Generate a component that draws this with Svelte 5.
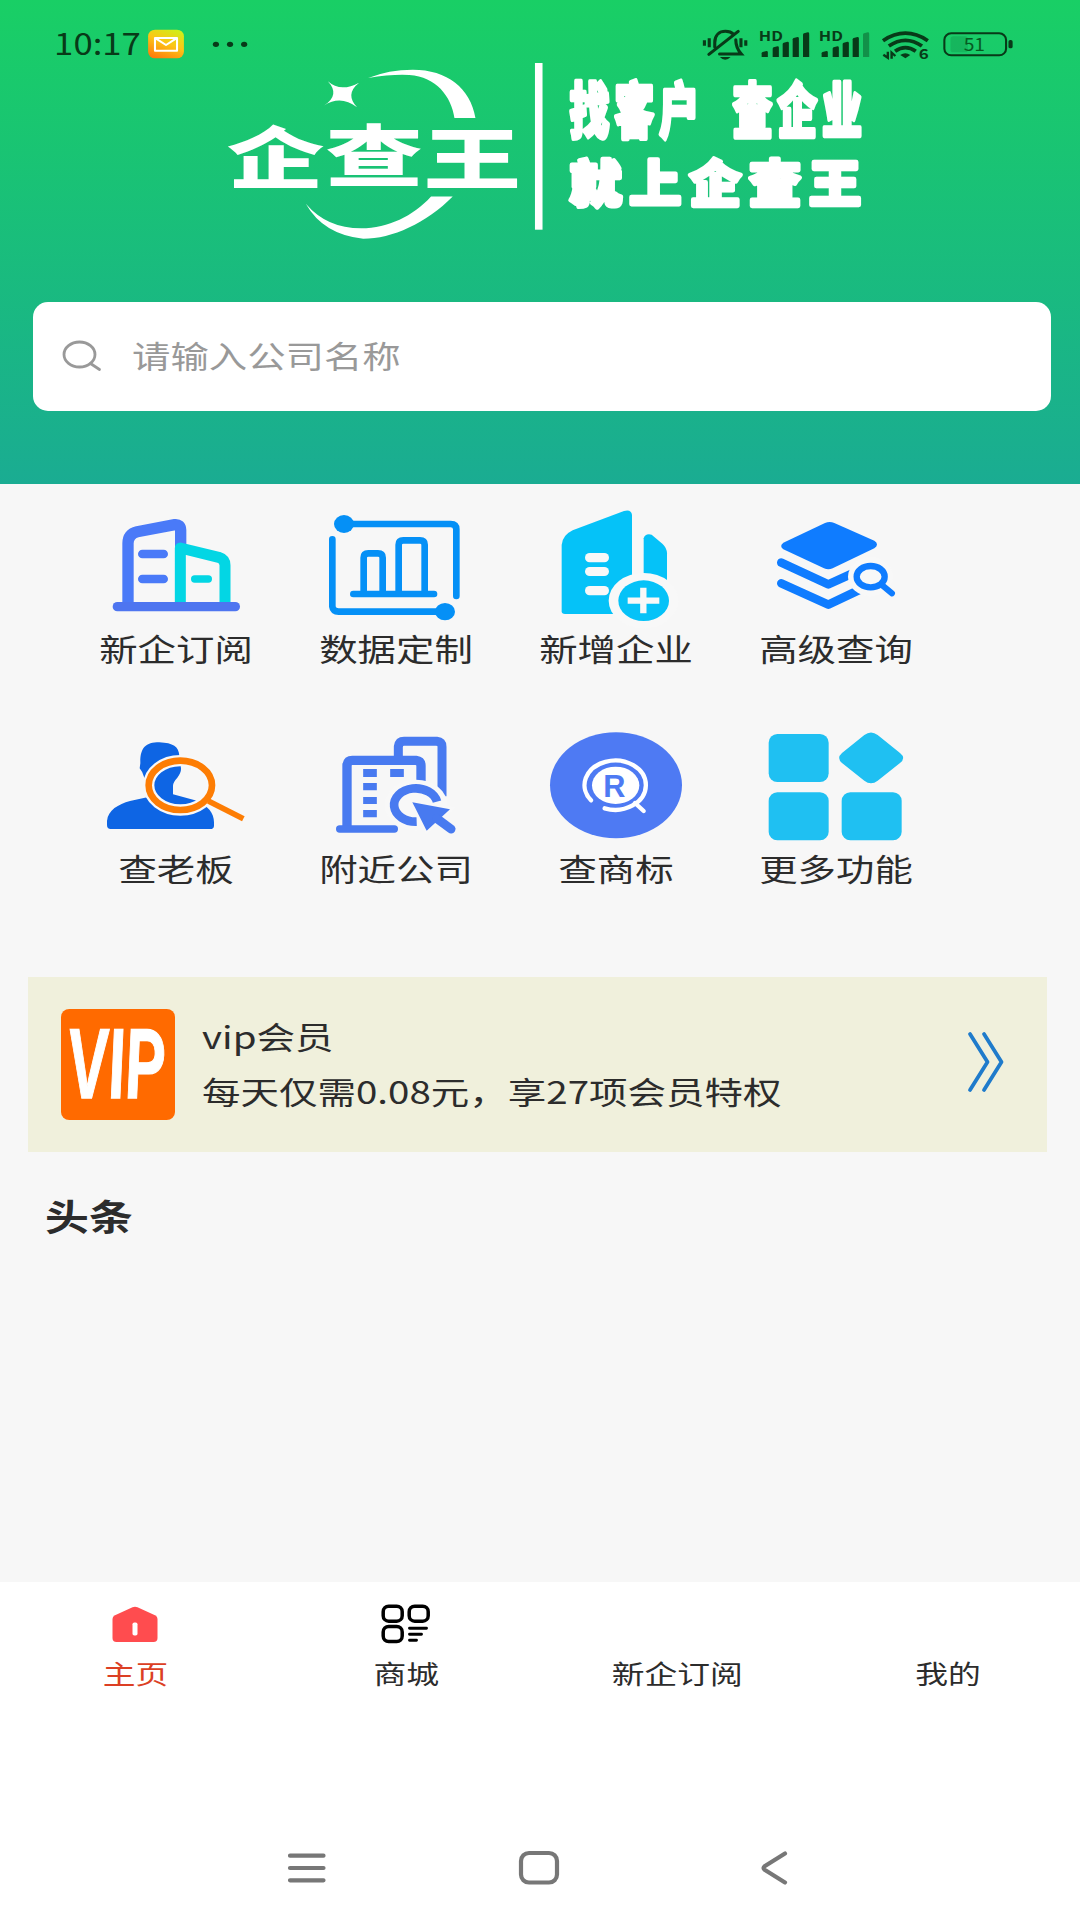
<script lang="ts">
interface Feature {
  id: string;
  label: string;
  viewBox: string;
}

interface Tab {
  id: string;
  label: string;
}

const features: Feature[] = [
  { id: 'subscribe', label: '新企订阅', viewBox: '75 45 420 360' },
  { id: 'data', label: '数据定制', viewBox: '735 45 420 360' },
  { id: 'added', label: '新增企业', viewBox: '75 45 420 360' },
  { id: 'advanced', label: '高级查询', viewBox: '735 45 420 360' },
  { id: 'boss', label: '查老板', viewBox: '75 30 420 360' },
  { id: 'nearby', label: '附近公司', viewBox: '735 30 420 360' },
  { id: 'trademark', label: '查商标', viewBox: '75 30 420 360' },
  { id: 'more', label: '更多功能', viewBox: '735 30 420 360' },
];

const tabs: Tab[] = [
  { id: 'home', label: '主页' },
  { id: 'mall', label: '商城' },
  { id: 'subscribe', label: '新企订阅' },
  { id: 'mine', label: '我的' },
];

const bars = [
  { x: 643, y: 152 },
  { x: 675, y: 138 },
  { x: 704, y: 124 },
  { x: 733, y: 110 },
  { x: 763, y: 96 },
];

let keyword = $state('');
let activeTab = $state('home');
</script>

{#snippet signal(offset: number, weak: boolean)}
  <g transform="translate({offset} 0)">
    <text x="635" y="123" font-size="38" font-weight="700" textLength="70" lengthAdjust="spacingAndGlyphs">HD</text>
    {#each bars as bar, i}
      <path
        d="M{bar.x} {bar.y + 7}q0-3 3-4l11-3q4 0 4 4V170h-18z"
        opacity={weak && i === bars.length - 1 ? 0.4 : 1}
      />
    {/each}
  </g>
{/snippet}

<div class="app">
  <header class="hero">
    <div class="status">
      <svg class="status-left" viewBox="145 80 581 105" preserveAspectRatio="none">
        <defs>
          <linearGradient id="mail" x1="0.2" y1="1" x2="0.7" y2="0">
            <stop offset="0" stop-color="#ff7a0c" />
            <stop offset="0.55" stop-color="#fcc516" />
            <stop offset="1" stop-color="#d3ec18" />
          </linearGradient>
        </defs>
        <text x="157" y="165" font-size="90" textLength="252" lengthAdjust="spacingAndGlyphs">10:17</text>
        <rect x="430" y="88" width="104" height="86" rx="20" fill="url(#mail)" />
        <path d="M450 113H514V151H450ZM452 114L482 134 512 114" fill="none" stroke="#fff" stroke-width="6" stroke-linejoin="round" />
        <ellipse cx="627" cy="132" rx="9" ry="8" />
        <ellipse cx="668" cy="132" rx="9" ry="8" />
        <ellipse cx="709" cy="132" rx="9" ry="8" />
      </svg>
      <svg class="status-right" viewBox="470 80 905 105" preserveAspectRatio="none">
        <g fill="none" stroke="currentColor" stroke-width="9" stroke-linecap="round">
          <path d="M507 140V127C507 104 521 93 538 93C548 93 557 97 562 102" />
          <path d="M568 118C568 138 573 148 584 161H521" />
          <path d="M490 162L575 93" />
          <path d="M477 120V136M491 114V141M583 114V141M597 120V136" stroke-linecap="butt" />
        </g>
        <path d="M522 170H553Q537 187 522 170Z" />
        {@render signal(0, false)}
        {@render signal(174, true)}
        <g fill="none" stroke="currentColor" stroke-width="11">
          <path d="M995 121Q1060 76 1125 121" />
          <path d="M1012 137Q1060 103 1108 137" />
          <path d="M1030 153Q1060 131 1090 153" />
        </g>
        <path d="M1045 164Q1060 153 1074 164L1060 174Z" />
        <path d="M1009 154V172L996 163M1020 175V157L1031 167" fill="none" stroke="currentColor" stroke-width="7" />
        <text x="1099" y="177" font-size="41" font-weight="700" textLength="29" lengthAdjust="spacingAndGlyphs">6</text>
        <rect x="1191" y="108" width="50" height="48" rx="8" opacity="0.15" />
        <rect x="1173" y="99" width="179" height="66" rx="20" fill="none" stroke="currentColor" stroke-width="6" />
        <rect x="1359" y="119" width="12" height="25" rx="5" />
        <text x="1229" y="153" font-size="54" fill="#075a22" textLength="62" lengthAdjust="spacingAndGlyphs">51</text>
      </svg>
    </div>

    <svg class="logo" viewBox="660 180 1860 550" preserveAspectRatio="none">
      <g fill="#fff">
        <path d="M1070 234Q1130 209 1200 209C1300 209 1368 265 1382 354H1321C1312 290 1268 230 1190 225Q1140 222 1070 234Z" />
        <path d="M889 612Q950 686 1050 686C1130 684 1200 650 1253 590H1316C1240 670 1140 717 1056 717Q940 705 889 612Z" />
        <path d="M953 244Q990 278 1044 248Q1002 282 1038 322Q990 284 942 317Q990 285 953 244Z" />
        <rect x="1555" y="189" width="22" height="501" />
      </g>
      <g class="logo-name">
        <text transform="translate(660 549) scale(1.4 1)">企</text>
        <text transform="translate(946 544) scale(1.4 1)">查</text>
        <text transform="translate(1231 552) scale(1.4 1)">王</text>
      </g>
      <g class="slogan">
        {#each ['找', '客', '户'] as char, i}
          <text transform="translate({1656 + i * 130} 399) scale(0.64 1)" font-size="180">{char}</text>
        {/each}
        {#each ['查', '企', '业'] as char, i}
          <text transform="translate({2130 + i * 130} 399) scale(0.64 1)" font-size="180">{char}</text>
        {/each}
        {#each ['就', '上', '企', '查', '王'] as char, i}
          <text transform="translate({1656 + i * 174} 607)" font-size="150">{char}</text>
        {/each}
      </g>
    </svg>

    <label class="search">
      <svg width="40" height="32" viewBox="0 0 40 32" fill="none" stroke="#999" stroke-width="2.8" stroke-linecap="round">
        <ellipse cx="16.500" cy="13.500" rx="15.500" ry="12.500" />
        <path d="M27.500 22.500L36.500 28.500" />
      </svg>
      <input bind:value={keyword} placeholder="请输入公司名称" />
    </label>
  </header>

  <main>
    <section class="features">
      {#each features as feature (feature.label)}
        <div class="feature">
          <svg width="140" height="120" viewBox={feature.viewBox} fill="none">
            {#if feature.id === 'subscribe'}
              <path d="M144 350V160Q144 132 172 125L284 104Q302 102 302 120V170" stroke="#4a7af8" stroke-width="34" />
              <path d="M301 340V174L416 202Q435 208 435 226V340" stroke="#03d6e4" stroke-width="33" stroke-linejoin="round" />
              <path d="M187 192H251M187 267H251" stroke="#4a7af8" stroke-width="26" stroke-linecap="round" />
              <path d="M344 267H385" stroke="#03d6e4" stroke-width="22" stroke-linecap="round" />
              <path d="M112 350H466" stroke="#4e75f0" stroke-width="28" stroke-linecap="round" />
            {:else if feature.id === 'data'}
              <g stroke="#0590f6" stroke-width="20" stroke-linecap="round">
                <path d="M815 102H1112Q1129 102 1129 118V318M757 148V350Q759 365 776 365H1070" />
                <path d="M820 312H1062" />
                <path d="M851 305V203Q851 190 865 190H894Q908 190 908 203V305M956 305V164Q956 151 970 151H1020Q1034 151 1034 164V305" />
              </g>
              <ellipse cx="792" cy="102" rx="30" ry="27" fill="#0590f6" />
              <ellipse cx="1095" cy="365" rx="30" ry="26" fill="#0590f6" />
            {:else if feature.id === 'added'}
              <path d="M125 165Q127 136 158 121L312 63Q334 57 336 75V372H135Q125 372 125 364Z" fill="#05c2f8" />
              <path d="M371 145Q376 129 395 134L427 161Q441 174 441 190V300H371Z" fill="#05c2f8" />
              <rect x="195" y="189" width="72" height="28" rx="14" fill="#f8f8f8" />
              <rect x="195" y="231" width="72" height="27" rx="14" fill="#f8f8f8" />
              <rect x="195" y="288" width="72" height="28" rx="14" fill="#f8f8f8" />
              <ellipse cx="371" cy="332" rx="105" ry="83" fill="#f8f8f8" />
              <ellipse cx="371" cy="332" rx="76" ry="61" fill="#05c2f8" />
              <path d="M370 293V370M323 332H418" stroke="#f8f8f8" stroke-width="19" />
            {:else if feature.id === 'advanced'}
              <path d="M790 158L915 99Q929 93 943 99L1063 152Q1079 163 1063 175L938 235Q925 241 912 235L790 178Q777 168 790 158Z" fill="#0f7cff" />
              <path d="M784 218L925 283L1020 240M784 280L925 344L1030 294" stroke="#0f7cff" stroke-width="26" stroke-linecap="round" stroke-linejoin="round" />
              <ellipse cx="1052" cy="260" rx="68" ry="59" fill="#f8f8f8" />
              <ellipse cx="1052" cy="260" rx="42" ry="32" stroke="#0f7cff" stroke-width="19" />
              <path d="M1088 287L1116 310" stroke="#0f7cff" stroke-width="18" stroke-linecap="round" />
            {:else if feature.id === 'boss'}
              <path
                d="M181 145C180 100 195 82 238 82C280 84 296 95 298 122L303 160Q304 172 292 188Q279 202 279 212V238L345 256C385 272 402 295 402 322V332Q402 342 390 342H92Q81 342 81 330V318C84 285 115 268 150 258L205 246Q215 200 193 188Q188 170 179 160Z"
                fill="#0e65e4"
              />
              <ellipse cx="301" cy="211" rx="95" ry="74" stroke="#f8f8f8" stroke-width="34" />
              <path d="M385 258L490 311" stroke="#fd7d04" stroke-width="17" />
              <ellipse cx="301" cy="211" rx="95" ry="74" stroke="#fd7d04" stroke-width="20" />
            {:else if feature.id === 'nearby'}
              <g stroke="#487af0" stroke-width="28">
                <path d="M955 130V95Q957 79 972 79H1070Q1086 81 1086 95V244" stroke-width="27" />
                <path d="M801 345V150Q803 136 817 136H1008Q1023 138 1023 152V205" />
                <path d="M779 342H943" stroke-width="22" stroke-linecap="round" />
              </g>
              <path d="M870 162V186M870 204V226M870 246V267M870 285V307M951 162V186" stroke="#487af0" stroke-width="41" />
              <ellipse cx="1008" cy="270" rx="94" ry="76" fill="#f8f8f8" />
              <path d="M1071 260A65 50 0 1 0 1010 320" stroke="#487af0" stroke-width="26" />
              <path d="M997 262L1110 283L1040 347Z" fill="#487af0" stroke="#f8f8f8" stroke-width="16" />
              <path d="M997 262L1110 283L1040 347Z" fill="#487af0" />
              <path d="M1070 310L1113 342" stroke="#487af0" stroke-width="27" stroke-linecap="round" />
            {:else if feature.id === 'trademark'}
              <ellipse cx="288" cy="211" rx="198" ry="159" fill="#4e7af3" />
              <path d="M213 256A92 74 0 1 1 254 280" stroke="#fff" stroke-width="13" stroke-linecap="round" />
              <path d="M345 264L371 288" stroke="#fff" stroke-width="13" stroke-linecap="round" />
              <ellipse cx="287" cy="211" rx="71" ry="56" fill="#fff" />
              <text x="250" y="246" class="mark">R</text>
            {:else}
              <g fill="#1fc0f2">
                <rect x="746" y="57" width="180" height="144" rx="26" />
                <rect x="746" y="232" width="180" height="144" rx="26" />
                <rect x="965" y="232" width="180" height="144" rx="26" />
                <path d="M1033 60Q1053 45 1073 60L1140 114Q1159 129 1140 144L1073 197Q1053 212 1033 197L966 144Q949 129 966 114Z" />
              </g>
            {/if}
          </svg>
          <span class="label">{feature.label}</span>
        </div>
      {/each}
    </section>

    <section class="vip">
      <svg class="vip-badge" viewBox="177 148 331 332" preserveAspectRatio="none">
        <rect x="177" y="148" width="331" height="332" rx="24" fill="#ff6a00" />
        <text transform="translate(203 413) skewX(4)" textLength="282" lengthAdjust="spacingAndGlyphs">VIP</text>
      </svg>
      <div class="vip-text">
        <span>vip会员</span>
        <span>每天仅需0.08元，享27项会员特权</span>
      </div>
      <svg class="more" width="38" height="62" viewBox="0 0 38 62" fill="none" stroke="#1f7bcb" stroke-width="3.800" stroke-linecap="round" stroke-linejoin="round">
        <path d="M3 3L20.500 31L3 59M17 3L34.500 31L17 59" />
      </svg>
    </section>

    <h2><span>头条</span></h2>
  </main>

  <nav class="tabs">
    {#each tabs as tab (tab.id)}
      <button class="tab" class:active={activeTab === tab.id} onclick={() => (activeTab = tab.id)}>
        <svg width="54" height="44" viewBox="0 0 54 44" fill="none">
          {#if tab.id === 'home'}
            <path d="M4.500 16Q4.500 13.500 7 12.300L24.500 4.300Q27 3.200 29.500 4.300L47 12.300Q49.500 13.500 49.500 16V35Q49.500 39 45.500 39H8.500Q4.500 39 4.500 35Z" fill="#ff4c4f" />
            <rect x="24.500" y="19.500" width="5" height="13" rx="1.800" fill="#fff" />
          {:else if tab.id === 'mall'}
            <g stroke="#000" stroke-width="3.500">
              <rect x="4.200" y="3.200" width="19" height="15" rx="5.500" />
              <rect x="30.200" y="3.200" width="19" height="15" rx="5.500" />
              <rect x="4.200" y="23.500" width="19" height="15" rx="5.500" />
              <path d="M30.500 25.200H47.500M30.500 31.200H42.500M30.500 37.200H37.500" stroke-width="2.900" stroke-linecap="round" />
            </g>
          {/if}
        </svg>
        <span>{tab.label}</span>
      </button>
    {/each}
  </nav>

  <footer class="system-nav">
    <svg width="40" height="36" viewBox="0 0 40 36" fill="none">
      <path d="M3 5.700H36.500M3 18H36.500M3 30.300H36.500" />
    </svg>
    <svg width="44" height="36" viewBox="0 0 44 36" fill="none">
      <rect x="4" y="3" width="36" height="29.500" rx="8" />
    </svg>
    <svg width="32" height="36" viewBox="0 0 32 36" fill="none">
      <path d="M27 3.500L7 16Q4 18 7 20L27 32.500" />
    </svg>
  </footer>
</div>

<style>
.app {
  display: flex;
  flex-direction: column;
  width: 1080px;
  height: 1920px;
  overflow: hidden;
  font-family: 'Noto Sans CJK SC', 'Noto Sans', sans-serif;
  color: #2c2c2c;
  background: #f7f7f7;
}

svg {
  display: block;
  flex: none;
  overflow: visible;
}

.hero {
  box-sizing: border-box;
  height: 484px;
  background: linear-gradient(#19cf65, #1aac92);
}

.status {
  box-sizing: border-box;
  display: flex;
  justify-content: space-between;
  height: 60px;
  padding: 26.700px 66px 0 50px;
  color: #083a18;
  fill: currentColor;
}

.status-left {
  width: 200px;
  height: 35px;
}

.status-right {
  width: 312px;
  height: 35px;
}

.logo {
  width: 640px;
  height: 183px;
  margin-left: 227px;
}

.logo-name {
  font-size: 202px;
  font-weight: 900;
  fill: #fff;
}

.slogan {
  font-weight: 900;
  fill: #fff;
  stroke: #fff;
  stroke-width: 13px;
  stroke-linejoin: round;
}

.search {
  display: flex;
  align-items: center;
  gap: 29px;
  height: 109px;
  padding: 0 30px;
  margin: 59px 29px 0 33px;
  background: #fff;
  border-radius: 15px;
}

.search input {
  flex: 1;
  padding: 0;
  margin-bottom: 5px;
  font: inherit;
  font-size: 38.400px;
  line-height: 60px;
  color: #333;
  background: none;
  border: none;
  outline: none;
  transform: scaleY(0.8);
}

.search input::placeholder {
  color: #999;
  opacity: 1;
}

main {
  flex: 1;
}

.features {
  display: grid;
  grid-template-columns: repeat(4, 220px);
  grid-auto-rows: 220px;
  padding: 21px 0 0 65px;
}

.feature {
  display: flex;
  flex-direction: column;
  align-items: center;
}

.mark {
  font-family: 'Liberation Sans', sans-serif;
  font-size: 92px;
  font-weight: 700;
  fill: #4e7af3;
}

.label {
  margin-top: -1.500px;
  margin-left: 2px;
  font-size: 38.400px;
  line-height: 46px;
  transform: scaleY(0.8);
}

.vip {
  box-sizing: border-box;
  display: flex;
  align-items: center;
  height: 175px;
  padding: 0 42px 0 33px;
  margin: 32px 33px 0 28px;
  background: #f0f0dc;
}

.vip-badge {
  width: 114px;
  height: 111px;
}

.vip-badge text {
  font-family: 'Liberation Sans', sans-serif;
  font-size: 298px;
  font-style: italic;
  font-weight: 700;
  fill: #fff;
  stroke: #fff;
  stroke-width: 4px;
}

.vip-text {
  display: flex;
  flex: 1;
  flex-direction: column;
  margin-bottom: 3px;
  margin-left: 27px;
}

.vip-text span {
  font-size: 38.500px;
  line-height: 55px;
  transform: scaleY(0.8);
}

.more {
  margin-bottom: 6px;
}

h2 {
  margin: 34px 0 0 45px;
  font-size: 43.900px;
  line-height: 58px;
}

h2 span {
  display: inline-block;
  transform: scaleY(0.82);
}

.tabs {
  display: flex;
  height: 228px;
  background: #fff;
}

.tab {
  display: flex;
  flex: 0 0 270.900px;
  flex-direction: column;
  align-items: center;
  padding: 21px 0 0;
  font: inherit;
  color: #2c2c2c;
  background: none;
  border: none;
}

.tab span {
  margin-top: 6px;
  font-size: 32.800px;
  line-height: 40px;
  transform: scaleY(0.8);
}

.tab.active {
  color: #dc3f24;
}

.system-nav {
  box-sizing: border-box;
  display: flex;
  gap: 190px;
  height: 110px;
  padding: 40px 0 0 287px;
  background: #fff;
  stroke: #777;
  stroke-width: 4.200px;
  stroke-linecap: round;
}

.system-nav svg:last-child {
  margin-left: 7px;
}
</style>
